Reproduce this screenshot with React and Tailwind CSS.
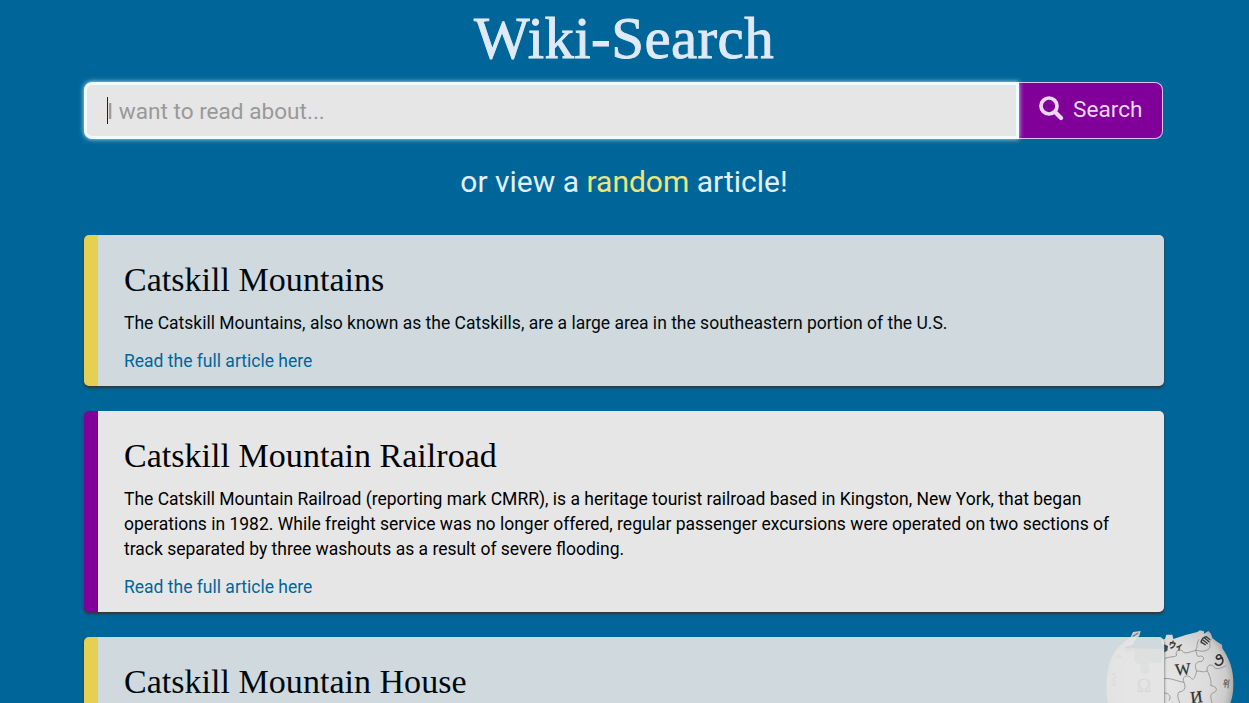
import React from 'react';

const articles = [
  {
    title: 'Catskill Mountains',
    lines: ['The Catskill Mountains, also known as the Catskills, are a large area in the southeastern portion of the U.S.'],
    active: false,
  },
  {
    title: 'Catskill Mountain Railroad',
    lines: [
      'The Catskill Mountain Railroad (reporting mark CMRR), is a heritage tourist railroad based in Kingston, New York, that began',
      'operations in 1982. While freight service was no longer offered, regular passenger excursions were operated on two sections of',
      'track separated by three washouts as a result of severe flooding.',
    ],
    active: true,
  },
  { title: 'Catskill Mountain House', lines: [], active: false },
];

function Card({ article }) {
  return (
    <article
      className={
        'min-h-[151px] rounded-[5px] border-l-[14px] bg-[#e6e6e6] pt-[23px] pr-6 pb-[12px] pl-[26px] text-black shadow-[0_2px_3px_#333] ' +
        (article.active ? 'border-[#800099]' : 'border-[#ffdc4b] opacity-90')
      }
    >
      <h2 className="h-[45px] whitespace-nowrap font-['Liberation_Serif',serif] text-[34px] leading-[44px] tracking-[0.03px]">{article.title}</h2>
      {article.lines.length > 0 && (
        <>
          <div className="mt-[8px] text-[17.5px] leading-[25px]">
            {article.lines.map((line) => (
              <p key={line} className="whitespace-nowrap">{line}</p>
            ))}
          </div>
          <a className="mt-[13px] block text-[17.5px] leading-[25px] text-[#006699]">Read the full article here</a>
        </>
      )}
    </article>
  );
}

function Globe() {
  return (
    <svg className="absolute top-[613px] left-[1089px] h-[90px] w-[160px]" viewBox="0 0 480 270">
      <defs>
        <radialGradient id="sphere" gradientUnits="userSpaceOnUse" cx="230" cy="210" r="215">
          <stop offset="0" stopColor="#e6e6e6" />
          <stop offset="0.6" stopColor="#dcdcdc" />
          <stop offset="0.85" stopColor="#cccccc" />
          <stop offset="1" stopColor="#999999" />
        </radialGradient>
      </defs>
      <path d="M105 105L225 108V190H105Z" fill="#9a9fa2" />
      <path
        d="M57 270C50 235 50 190 62 150C70 125 85 100 125 72L132 57L155 54L151 68L136 84L131 96L108 102L105 112L118 117L132 112L138 120L134 138L142 150L158 154L153 170L163 184L180 181L182 166L176 154L190 148L217 150L222 120L226 98L218 92L217 80L228 78L232 65L250 65L253 78L290 66L325 57L333 52L345 55L345 62L358 54L366 62L370 75L382 85L399 95L400 106C422 138 434 172 433 215C433 235 430 255 424 270Z"
        fill="url(#sphere)"
      />
      <path d="M131 70L148 60" stroke="#718087" strokeWidth="4" />
      <path d="M226 94L237 99L235 113L226 118Z" fill="#34505a" />
      <g fill="none" stroke="#8d8d8d" strokeWidth="2.5">
        <path d="M228 136C245 130 254 133 263 128C256 113 274 105 282 116C288 124 302 117 320 112C327 101 322 88 330 79" />
        <path d="M320 112C326 124 319 133 335 129C352 132 342 148 330 146C316 150 318 162 323 174C336 174 343 180 355 173C350 160 365 150 374 160C378 172 395 166 412 158" />
        <path d="M226 197C245 194 264 205 285 208C276 192 294 183 304 193C313 206 318 194 323 174" />
        <path d="M355 173C361 188 369 202 365 218C383 218 388 234 374 239C360 242 367 260 369 270" />
        <path d="M285 208C292 224 286 236 270 237C262 249 270 260 272 270" />
        <path d="M368 77C355 89 371 102 356 110C342 119 331 112 320 112" />
        <path d="M226 240C238 240 249 250 240 262" />
      </g>
      <g fill="#303030" stroke="#303030" strokeWidth="0.8" fontFamily="'Liberation Serif', 'Noto Sans CJK JP', serif">
        <text x="258" y="186" fontSize="50" transform="rotate(-5 280 170)">W</text>
        <text x="304" y="269" fontSize="51" transform="rotate(-7 324 252)">И</text>
        <text x="239" y="108" fontSize="28" fontWeight="700" transform="rotate(10 258 98)" fontFamily="'Noto Sans CJK JP', sans-serif" textLength="43" lengthAdjust="spacingAndGlyphs">ウィ</text>
        <text x="143" y="236" fontSize="58" fill="#707070" stroke="#707070">Ω</text>
        <text x="402" y="223" fontSize="29" fill="#555555" stroke="#555555" transform="rotate(8 414 212)" fontFamily="'Noto Sans CJK KR', sans-serif" textLength="20" lengthAdjust="spacingAndGlyphs">위</text>
      </g>
      <g fill="none" stroke="#333333">
        <path d="M383 130C388 122 397 125 397 134C389 142 379 137 383 130M398 132C409 151 389 166 378 150" strokeWidth="5" />
        <path d="M338 88L350 96M341 80L356 92M346 74L361 87M353 72L363 80M337 90C335 80 343 71 354 71" strokeWidth="4" />
      </g>
      <g fill="none" stroke="#858585" strokeWidth="3.5">
        <path d="M69 186L76 180L80 192L70 198L78 205L79 219L70 216L70 203" />
        <path d="M80 137L91 125M86 128L99 132" />
      </g>
    </svg>
  );
}

export default function App() {
  return (
    <main className="relative h-[703px] overflow-hidden bg-[#006699] font-[Roboto,sans-serif]">
      <Globe />
      <div className="relative ml-[84px] w-[1080px]">
        <h1 className="h-[82px] pt-[3px] text-center font-['Liberation_Serif',serif] text-[59px] leading-[70px] tracking-[0.4px] text-[#dfeaf6] [-webkit-text-stroke:0.9px_#dfeaf6]">Wiki-Search</h1>
        <form className="flex h-[57px] w-[1079px] text-[22.6px]">
          <div className="relative z-10 flex flex-1 items-center rounded-l-[8px] border-[3px] border-[#f0faff] bg-[#e6e6e6] pl-[20px] text-[#999] shadow-[0_0_5px_#c9e8f6]">
            <span className="h-[27px] w-px bg-[#222]" />
            <span className="-ml-px pt-[2px]">I want to read about...</span>
          </div>
          <button type="button" className="flex w-[144px] items-center rounded-r-[8px] border border-l-0 border-[#d9c5f0] bg-[#800099] pb-[3px] pl-[20px] text-[#ecd9f5]">
            <svg className="mb-px h-[25px] w-[25px]" viewBox="0 0 25 25" fill="none" stroke="currentColor">
              <circle cx="10" cy="10" r="8" strokeWidth="3.7" />
              <path d="M16 16L22 22" strokeWidth="4.3" strokeLinecap="round" />
            </svg>
            <span className="ml-[9px] pt-[2px]">Search</span>
          </button>
        </form>
        <p className="mt-[22px] text-center text-[30px] leading-[42px] text-[#e0f0fa]">
          or view a <a className="text-[#eee47a]">random</a> article!
        </p>
        <section className="mt-[32px] flex flex-col gap-[25px]">
          {articles.map((article) => (
            <Card key={article.title} article={article} />
          ))}
        </section>
      </div>
    </main>
  );
}
